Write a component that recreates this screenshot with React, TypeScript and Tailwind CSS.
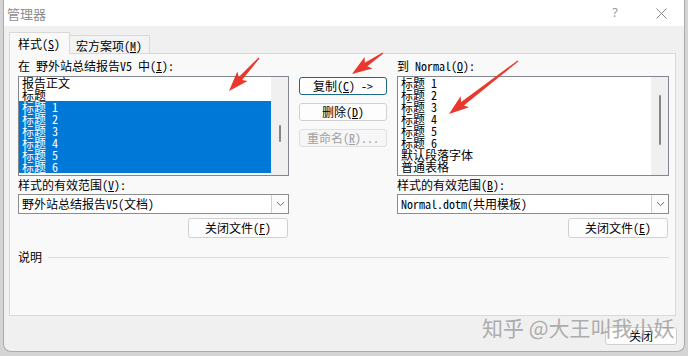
import React from 'react';

const MONO = "font-['Noto_Sans_Mono_CJK_SC','Liberation_Mono','Noto_Sans_CJK_SC',monospace]";

const LEFT_ITEMS = ['报告正文', '标题', '标题 1', '标题 2', '标题 3', '标题 4', '标题 5', '标题 6'];
const RIGHT_ITEMS = ['标题 1', '标题 2', '标题 3', '标题 4', '标题 5', '标题 6', '默认段落字体', '普通表格'];

// Red annotation arrows, tail -> tip, in page pixels.
const ARROWS: [number, number, number, number][] = [
  [259, 58, 229, 91],
  [383, 53, 352, 74],
  [518, 61, 449, 114],
];

function arrowPoints(x1: number, y1: number, x2: number, y2: number) {
  const len = Math.hypot(x2 - x1, y2 - y1);
  const dx = (x2 - x1) / len;
  const dy = (y2 - y1) / len;
  const nx = -dy;
  const ny = dx;
  const headLen = 17;
  const bx = x2 - dx * headLen;
  const by = y2 - dy * headLen;
  const wx = x2 - dx * (headLen + 3);
  const wy = y2 - dy * (headLen + 3);
  const pts: [number, number][] = [
    [x1 + nx * 0.6, y1 + ny * 0.6],
    [bx + nx * 2.2, by + ny * 2.2],
    [wx + nx * 7, wy + ny * 7],
    [x2, y2],
    [wx - nx * 7, wy - ny * 7],
    [bx - nx * 2.2, by - ny * 2.2],
    [x1 - nx * 0.6, y1 - ny * 0.6],
  ];
  return pts.map((p) => p.join(',')).join(' ');
}

function Key({ k }: { k: string }) {
  return (
    <>
      (<span className="underline underline-offset-1">{k}</span>)
    </>
  );
}

function ListBox({
  items,
  selectedFrom,
  thumbTop,
  thumbHeight,
}: {
  items: string[];
  selectedFrom?: number;
  thumbTop: number;
  thumbHeight: number;
}) {
  return (
    <div className="mt-[3px] flex h-[100px] border border-[#82868e] bg-white">
      <div className="flex-1 overflow-hidden">
        {items.map((it, i) => {
          const sel = selectedFrom !== undefined && i >= selectedFrom;
          return (
            <div
              key={it + i}
              className={`h-[12px] whitespace-pre pl-[3px] text-[12px] leading-[12px] ${
                sel ? 'bg-[#0078d7] text-white' : 'text-black'
              }`}
            >
              {it}
            </div>
          );
        })}
      </div>
      <div className="w-[17px] bg-[#f0f0f0]" style={{ paddingTop: thumbTop }}>
        <div className="mx-auto w-[2px] rounded-full bg-[#858585]" style={{ height: thumbHeight }} />
      </div>
    </div>
  );
}

function Combo({ value }: { value: string }) {
  return (
    <div className="mt-[2px] flex h-[20px] border border-[#8c8c8c] bg-white">
      <div className="flex-1 whitespace-pre pl-[3px] text-[12px] leading-[18px] text-black">{value}</div>
      <div className="flex w-[17px] items-center justify-center border-l border-[#d0d0d0] bg-[#fbfbfb]">
        <svg width="9" height="6" viewBox="0 0 9 6">
          <path d="M1 1.2 L4.5 4.6 L8 1.2" fill="none" stroke="#6b6b6b" strokeWidth="1" />
        </svg>
      </div>
    </div>
  );
}

function Btn({
  children,
  w,
  focus = false,
  disabled = false,
  h = 'h-[20px]',
}: {
  children: React.ReactNode;
  w: string;
  focus?: boolean;
  disabled?: boolean;
  h?: string;
}) {
  return (
    <div
      className={`${w} ${h} flex items-center justify-center rounded-[3px] border text-[12px] leading-[12px] ${
        focus
          ? 'border-[#1d6a86] bg-[#fdfdfd] text-black'
          : disabled
            ? 'border-[#e0e0e0] bg-[#f6f6f6] text-[#a0a0a0]'
            : 'border-[#d0d0d0] bg-[#fdfdfd] text-black'
      }`}
    >
      {children}
    </div>
  );
}

export default function App() {
  return (
    <div className={`relative h-[356px] w-[688px] overflow-hidden bg-[#d4d4d4] ${MONO}`}>
      <div className="ml-[3px] flex h-[352px] w-[682px] flex-col overflow-hidden rounded-b-[8px] border-x border-b border-[#ababab] bg-[#f0f0f0]">
        <div className="flex h-[26px] items-center bg-white">
          <div className="flex-1 pl-[3px] font-['Noto_Sans_CJK_SC',sans-serif] text-[13px] leading-[13px] text-[#8e8e8e]">
            管理器
          </div>
          <div className="flex w-[46px] justify-center font-['Noto_Sans','Noto_Sans_CJK_SC',sans-serif] text-[13px] text-[#9a9a9a]">
            ?
          </div>
          <div className="flex w-[46px] justify-center">
            <svg width="11" height="11" viewBox="0 0 11 11">
              <path d="M0.5 0.5 L10.5 10.5 M10.5 0.5 L0.5 10.5" stroke="#8a8a8a" strokeWidth="1" />
            </svg>
          </div>
        </div>

        <div className="pl-[5px] pt-[6px]">
          <div className="flex h-[21px] items-end">
            <div className="relative z-10 -mb-px h-[22px] w-[61px] border-x border-t border-[#d9d9d9] bg-[#f9f9f9] pl-[8px] pt-[4px] text-[12px] leading-[14px] text-black">
              样式<Key k="S" />
            </div>
            <div className="h-[18px] w-[80px] border-r border-t border-[#d9d9d9] bg-[#f3f3f3] pl-[6px] pt-[3px] text-[12px] leading-[14px] text-black">
              宏方案项<Key k="M" />
            </div>
          </div>

          <div className="h-[263px] w-[667px] border border-[#d9d9d9] bg-[#f9f9f9] pl-[8px] pr-[6px] pt-[5px]">
            <div className="grid grid-cols-[271px_88px_272px] gap-x-[10px] text-[12px] text-black">
              <div>
                <div className="h-[14px] whitespace-pre leading-[14px]">
                  在 野外站总结报告V5 中<Key k="I" />:
                </div>
                <ListBox items={LEFT_ITEMS} selectedFrom={2} thumbTop={48} thumbHeight={17} />
                <div className="mt-[2px] h-[14px] leading-[14px]">
                  样式的有效范围<Key k="V" />:
                </div>
                <Combo value="野外站总结报告V5(文档)" />
                <div className="mt-[4px] flex justify-end pr-[1px]">
                  <Btn w="w-[100px]">
                    关闭文件<Key k="F" />
                  </Btn>
                </div>
              </div>

              <div className="flex flex-col gap-[8px] pt-[18px]">
                <Btn w="w-[88px]" h="h-[18px]" focus>
                  复制<Key k="C" />&nbsp;-&gt;
                </Btn>
                <Btn w="w-[88px]" h="h-[18px]">
                  删除<Key k="D" />
                </Btn>
                <Btn w="w-[88px]" h="h-[18px]" disabled>
                  重命名<Key k="R" />...
                </Btn>
              </div>

              <div>
                <div className="h-[14px] whitespace-pre leading-[14px]">
                  到 Normal<Key k="O" />:
                </div>
                <ListBox items={RIGHT_ITEMS} thumbTop={18} thumbHeight={50} />
                <div className="mt-[2px] h-[14px] leading-[14px]">
                  样式的有效范围<Key k="B" />:
                </div>
                <Combo value="Normal.dotm(共用模板)" />
                <div className="mt-[4px] flex justify-end pr-[1px]">
                  <Btn w="w-[100px]">
                    关闭文件<Key k="E" />
                  </Btn>
                </div>
              </div>
            </div>

            <div className="mt-[12px] flex h-[14px] items-center text-[12px] text-black">
              <span className="leading-[14px]">说明</span>
              <div className="ml-[6px] h-px flex-1 bg-[#dcdcdc]" />
            </div>
          </div>
        </div>

        <div className="mt-[11px] flex justify-end pr-[7px]">
          <Btn w="w-[72px]" h="h-[18px]">
            关闭
          </Btn>
        </div>
      </div>

      <div className="pointer-events-none absolute left-[482px] top-[315px] whitespace-pre font-['Noto_Sans_CJK_SC',sans-serif] text-[21px] leading-[24px] text-[#9c9c9c] opacity-80">
        知乎 @大王叫我小妖
      </div>

      <svg className="pointer-events-none absolute left-0 top-0" width="688" height="356">
        {ARROWS.map(([a, b, c, d], i) => (
          <polygon key={i} points={arrowPoints(a, b, c, d)} fill="#e9382c" />
        ))}
      </svg>
    </div>
  );
}
